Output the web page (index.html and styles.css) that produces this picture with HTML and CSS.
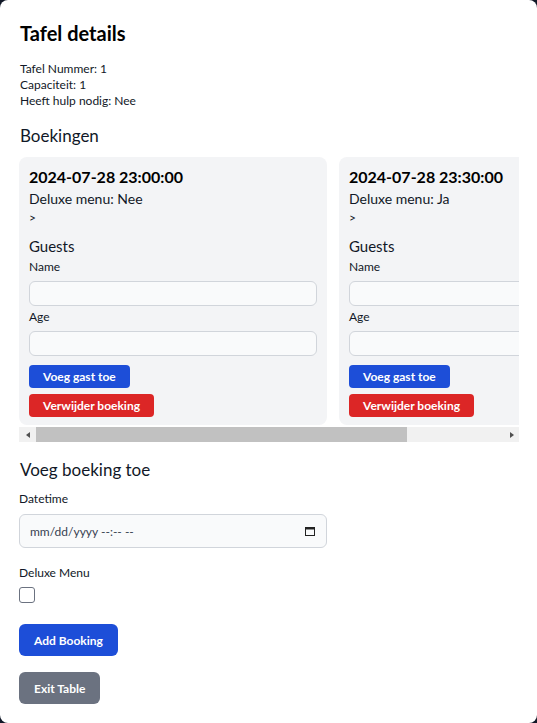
FILE: index.html
```html
<!DOCTYPE html>
<html lang="nl">
<head>
<meta charset="utf-8">
<title>Tafel details</title>
<link rel="stylesheet" href="styles.css">
</head>
<body>
<div class="modal">
  <h2 class="title">Tafel details</h2>
  <div class="info">
    <p>Tafel Nummer: 1</p>
    <p>Capaciteit: 1</p>
    <p>Heeft hulp nodig: Nee</p>
  </div>
  <h3 class="section">Boekingen</h3>
  <div class="bookings">
    <div class="booking">
      <h4 class="date">2024-07-28 23:00:00</h4>
      <p class="deluxe">Deluxe menu: Nee</p>
      <p class="arrow">&gt;</p>
      <h5 class="guests">Guests</h5>
      <label class="label">Name</label>
      <input class="field" type="text">
      <label class="label">Age</label>
      <input class="field" type="text">
      <button class="btn-sm blue">Voeg gast toe</button>
      <button class="btn-sm red">Verwijder boeking</button>
    </div>
    <div class="booking">
      <h4 class="date">2024-07-28 23:30:00</h4>
      <p class="deluxe">Deluxe menu: Ja</p>
      <p class="arrow">&gt;</p>
      <h5 class="guests">Guests</h5>
      <label class="label">Name</label>
      <input class="field" type="text">
      <label class="label">Age</label>
      <input class="field" type="text">
      <button class="btn-sm blue">Voeg gast toe</button>
      <button class="btn-sm red">Verwijder boeking</button>
    </div>
  </div>
  <div class="scrollbar" aria-hidden="true">
    <span class="sb-btn"><span class="tri left"></span></span>
    <span class="sb-track"><span class="sb-thumb"></span></span>
    <span class="sb-btn"><span class="tri right"></span></span>
  </div>
  <h3 class="section add-title">Voeg boeking toe</h3>
  <label class="label">Datetime</label>
  <div class="dt">
    <span class="dt-text">mm/dd/yyyy --:-- --</span>
    <svg class="cal" width="10" height="9" viewBox="0 0 10 9" aria-hidden="true">
      <rect x="0.5" y="0.5" width="9" height="8" fill="none" stroke="#222" stroke-width="1"/>
      <rect x="0.5" y="0.5" width="9" height="2" fill="#222"/>
    </svg>
  </div>
  <label class="label dm-label">Deluxe Menu</label>
  <input class="check" type="checkbox">
  <button class="btn blue add">Add Booking</button>
  <button class="btn gray exit">Exit Table</button>
</div>
</body>
</html>
```
FILE: styles.css
```css
* { box-sizing: border-box; }
html, body { margin: 0; padding: 0; }
body {
  background: #111827;
  font-family: "Lato", "Open Sans", sans-serif;
  color: #111827;
}
.modal {
  background: #ffffff;
  border-radius: 8px;
  padding: 20px 18px 19px 19px;
  display: flex;
  flex-direction: column;
  align-items: flex-start;
  min-height: 723px;
}
.title {
  margin: 0 0 13px 1px;
  font-size: 20px;
  line-height: 26px;
  font-weight: 700;
  color: #000;
}
.info { margin-left: 1px; margin-top: 2px; }
.info p {
  margin: 0;
  font-size: 12px;
  line-height: 16px;
}
.section {
  margin: 15px 0 9px 1px;
  font-size: 17px;
  line-height: 24px;
  font-weight: 400;
}
.bookings {
  display: flex;
  gap: 12px;
  width: 100%;
  overflow: hidden;
}
.booking {
  flex: 0 0 308px;
  background: #f3f4f6;
  border-radius: 8px;
  padding: 8px 10px 8px 10px;
  display: flex;
  flex-direction: column;
  align-items: flex-start;
}
.scrollbar {
  display: flex;
  width: 100%;
  height: 15px;
  margin-top: 2px;
  background: #f1f1f1;
}
.sb-btn {
  flex: 0 0 15px;
  display: flex;
  align-items: center;
  justify-content: center;
}
.sb-track {
  flex: 1;
  display: flex;
  padding-left: 2px;
}
.sb-thumb {
  width: 371px;
  background: #c1c1c1;
}
.tri {
  width: 0;
  height: 0;
  border-top: 3.5px solid transparent;
  border-bottom: 3.5px solid transparent;
}
.tri.left { border-right: 4px solid #505050; margin-left: 2px; }
.tri.right { border-left: 4px solid #505050; margin-left: 1px; }
.date {
  margin: 0;
  font-size: 16px;
  line-height: 24px;
  font-weight: 700;
  color: #000;
}
.deluxe { margin: 0; font-size: 14px; line-height: 20px; }
.arrow { margin: 1px 0 0; font-size: 12px; line-height: 16px; }
.guests {
  margin: 9px 0 2px;
  font-size: 15px;
  line-height: 22px;
  font-weight: 400;
}
.label {
  display: block;
  font-size: 12px;
  line-height: 16px;
  font-weight: 400;
}
.field {
  width: 100%;
  height: 25px;
  margin: 6px 0 3px;
  background: #f9fafb;
  border: 1px solid #d1d5db;
  border-radius: 6px;
}
.field + .label + .field { margin-bottom: 9px; }
.btn-sm {
  border: 0;
  color: #fff;
  font-family: inherit;
  font-size: 12px;
  font-weight: 700;
  height: 23px;
  padding: 0 14px;
  border-radius: 4px;
}
.btn-sm.red { margin-top: 6px; }
.blue { background: #1d4ed8; }
.red { background: #dc2626; }
.gray { background: #6b7280; }
.add-title { margin-top: 16px; }
.dt {
  width: 308px;
  height: 34px;
  margin-top: 7px;
  background: #f9fafb;
  border: 1px solid #d1d5db;
  border-radius: 6px;
  padding: 0 11px 0 10px;
  display: flex;
  align-items: center;
  justify-content: space-between;
  font-size: 12px;
  color: #374151;
}
.dm-label { margin-top: 17px; }
.check {
  appearance: none;
  -webkit-appearance: none;
  width: 16px;
  height: 16px;
  margin: 6px 0 0;
  border: 1px solid #6b7280;
  border-radius: 3px;
  background: #fff;
}
.btn {
  border: 0;
  color: #fff;
  font-family: inherit;
  font-size: 12px;
  font-weight: 700;
  height: 32px;
  padding: 0 15px;
  border-radius: 6px;
}
.add { margin-top: 21px; }
.exit { margin-top: 16px; }
```
